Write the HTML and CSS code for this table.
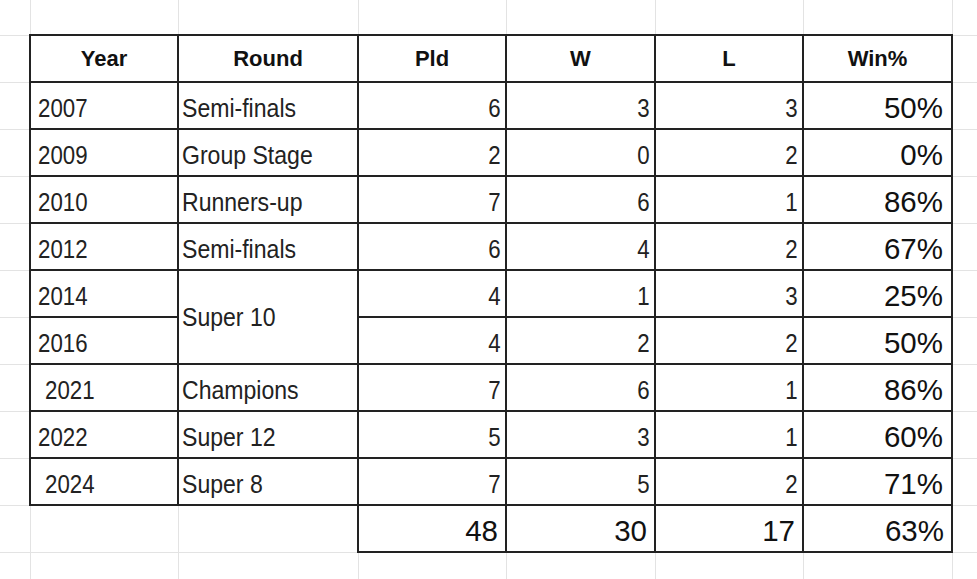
FILE: index.html
```html
<!DOCTYPE html>
<html lang="en">
<head>
<meta charset="utf-8">
<title>T20 World Cup record</title>
<link rel="stylesheet" href="styles.css">
</head>
<body>
<table class="sheet">
  <colgroup>
    <col class="c-edge">
    <col class="c-year">
    <col class="c-round">
    <col class="c-num">
    <col class="c-w">
    <col class="c-num">
    <col class="c-w">
    <col class="c-rest">
  </colgroup>
  <tr class="r-top"><td></td><td></td><td></td><td></td><td></td><td></td><td></td><td></td></tr>
  <tr class="r-data">
    <td></td>
    <td class="cell head">Year</td>
    <td class="cell head">Round</td>
    <td class="cell head">Pld</td>
    <td class="cell head">W</td>
    <td class="cell head">L</td>
    <td class="cell head">Win%</td>
    <td></td>
  </tr>
  <tr class="r-data">
    <td></td>
    <td class="cell year"><span class="nl">2007</span></td>
    <td class="cell txt"><span class="nl">Semi-finals</span></td>
    <td class="cell num"><span class="nr">6</span></td>
    <td class="cell num"><span class="nr">3</span></td>
    <td class="cell num"><span class="nr">3</span></td>
    <td class="cell pct">50%</td>
    <td></td>
  </tr>
  <tr class="r-data">
    <td></td>
    <td class="cell year"><span class="nl">2009</span></td>
    <td class="cell txt"><span class="nl">Group Stage</span></td>
    <td class="cell num"><span class="nr">2</span></td>
    <td class="cell num"><span class="nr">0</span></td>
    <td class="cell num"><span class="nr">2</span></td>
    <td class="cell pct">0%</td>
    <td></td>
  </tr>
  <tr class="r-data">
    <td></td>
    <td class="cell year"><span class="nl">2010</span></td>
    <td class="cell txt"><span class="nl">Runners-up</span></td>
    <td class="cell num"><span class="nr">7</span></td>
    <td class="cell num"><span class="nr">6</span></td>
    <td class="cell num"><span class="nr">1</span></td>
    <td class="cell pct">86%</td>
    <td></td>
  </tr>
  <tr class="r-data">
    <td></td>
    <td class="cell year"><span class="nl">2012</span></td>
    <td class="cell txt"><span class="nl">Semi-finals</span></td>
    <td class="cell num"><span class="nr">6</span></td>
    <td class="cell num"><span class="nr">4</span></td>
    <td class="cell num"><span class="nr">2</span></td>
    <td class="cell pct">67%</td>
    <td></td>
  </tr>
  <tr class="r-data">
    <td></td>
    <td class="cell year"><span class="nl">2014</span></td>
    <td class="cell txt merged" rowspan="2"><span class="nl">Super 10</span></td>
    <td class="cell num"><span class="nr">4</span></td>
    <td class="cell num"><span class="nr">1</span></td>
    <td class="cell num"><span class="nr">3</span></td>
    <td class="cell pct">25%</td>
    <td></td>
  </tr>
  <tr class="r-data">
    <td></td>
    <td class="cell year"><span class="nl">2016</span></td>
    <td class="cell num"><span class="nr">4</span></td>
    <td class="cell num"><span class="nr">2</span></td>
    <td class="cell num"><span class="nr">2</span></td>
    <td class="cell pct">50%</td>
    <td></td>
  </tr>
  <tr class="r-data">
    <td></td>
    <td class="cell year indent"><span class="nl">2021</span></td>
    <td class="cell txt"><span class="nl">Champions</span></td>
    <td class="cell num"><span class="nr">7</span></td>
    <td class="cell num"><span class="nr">6</span></td>
    <td class="cell num"><span class="nr">1</span></td>
    <td class="cell pct">86%</td>
    <td></td>
  </tr>
  <tr class="r-data">
    <td></td>
    <td class="cell year"><span class="nl">2022</span></td>
    <td class="cell txt"><span class="nl">Super 12</span></td>
    <td class="cell num"><span class="nr">5</span></td>
    <td class="cell num"><span class="nr">3</span></td>
    <td class="cell num"><span class="nr">1</span></td>
    <td class="cell pct">60%</td>
    <td></td>
  </tr>
  <tr class="r-data">
    <td></td>
    <td class="cell year indent"><span class="nl">2024</span></td>
    <td class="cell txt"><span class="nl">Super 8</span></td>
    <td class="cell num"><span class="nr">7</span></td>
    <td class="cell num"><span class="nr">5</span></td>
    <td class="cell num"><span class="nr">2</span></td>
    <td class="cell pct">71%</td>
    <td></td>
  </tr>
  <tr class="r-data">
    <td></td>
    <td></td>
    <td></td>
    <td class="cell total">48</td>
    <td class="cell total">30</td>
    <td class="cell total">17</td>
    <td class="cell total">63%</td>
    <td></td>
  </tr>
  <tr class="r-bottom"><td></td><td></td><td></td><td></td><td></td><td></td><td></td><td></td></tr>
</table>
</body>
</html>
```

FILE: styles.css
```css
html, body {
  margin: 0;
  padding: 0;
  background: #ffffff;
  overflow: hidden;
}

.sheet {
  border-collapse: collapse;
  table-layout: fixed;
  width: 977px;
  font-family: "Liberation Sans", Arial, sans-serif;
  color: #1a1a1a;
}

.c-edge { width: 30px; }
.c-year { width: 148px; }
.c-round { width: 180px; }
.c-num { width: 148px; }
.c-w { width: 149px; }
.c-rest { width: 25px; }

.sheet td {
  padding: 0;
  border: 1px solid #e3e3e3;
  white-space: nowrap;
  overflow: hidden;
}

.sheet tr > td:first-child { border-left: none; }
.sheet tr > td:last-child { border-right: none; }
.sheet tr.r-top { height: 35px; }
.sheet tr.r-top td { border-top: none; }
.sheet tr.r-data { height: 47px; }
.sheet tr.r-bottom { height: 27px; }
.sheet tr.r-bottom td { border-bottom: none; }

.sheet td.cell {
  border: 2px solid #222222;
  vertical-align: bottom;
  line-height: 30px;
  padding-bottom: 5px;
}

.sheet td.head {
  text-align: center;
  font-weight: bold;
  font-size: 22px;
  color: #111111;
  padding-bottom: 7px;
}

.sheet td.year,
.sheet td.txt,
.sheet td.num {
  font-size: 26.5px;
  color: #222222;
}

.nl, .nr {
  display: inline-block;
  transform: scaleX(0.84);
}
.nl { transform-origin: left center; }
.nr { transform-origin: right center; }

.sheet td.year { padding-left: 7px; }
.sheet td.year.indent { padding-left: 14px; }
.sheet td.txt { padding-left: 3px; }

.sheet td.txt .nl { transform: scaleX(0.87); }

.sheet td.merged {
  vertical-align: middle;
  padding-bottom: 0;
}

.sheet td.num {
  text-align: right;
  padding-right: 4px;
}

.sheet td.pct,
.sheet td.total {
  text-align: right;
  font-size: 29.5px;
  padding-right: 8px;
  color: #111111;
}

.sheet td.total { padding-right: 7px; }
```
